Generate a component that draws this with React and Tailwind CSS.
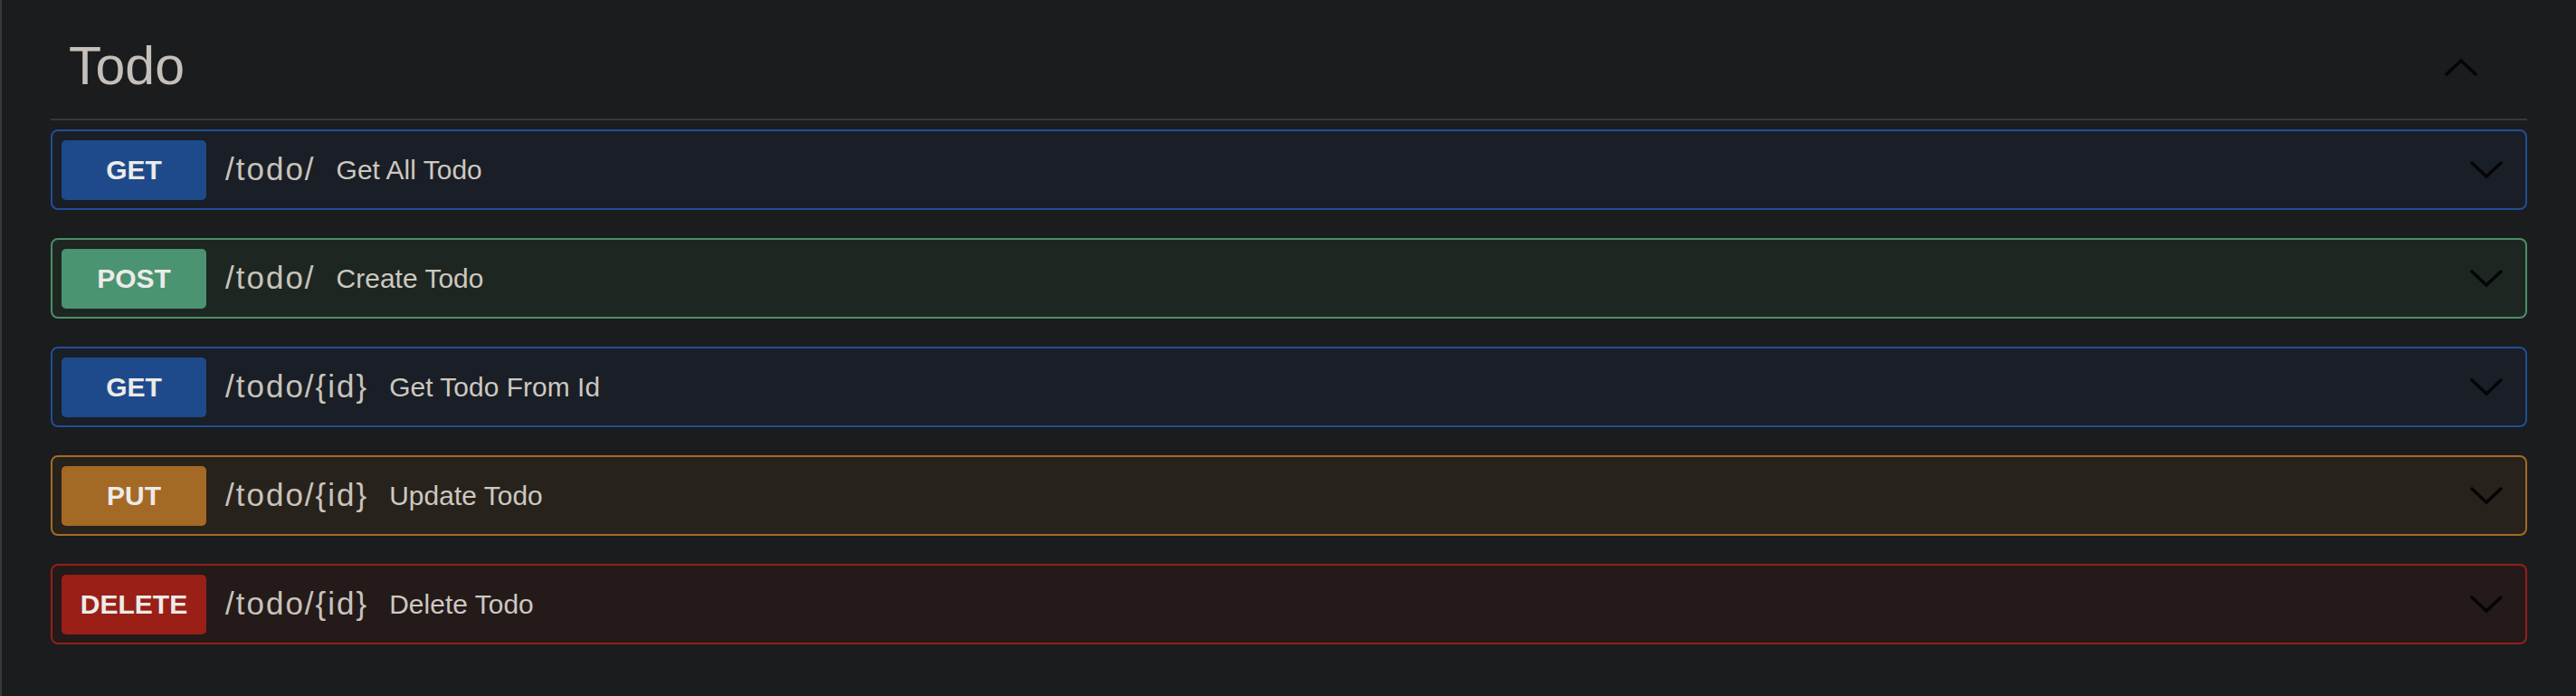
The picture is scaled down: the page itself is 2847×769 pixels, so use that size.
import React from 'react';

const styles = {
  GET: {
    row: 'bg-[#1a1e26] border-[#1f4f96]',
    badge: 'bg-[#1e4a8c]',
  },
  POST: {
    row: 'bg-[#1e2622] border-[#4a8f66]',
    badge: 'bg-[#4a9471]',
  },
  PUT: {
    row: 'bg-[#28221c] border-[#a66a24]',
    badge: 'bg-[#a56926]',
  },
  DELETE: {
    row: 'bg-[#241a1a] border-[#951f19]',
    badge: 'bg-[#991f17]',
  },
};

const operations = [
  { method: 'GET', path: '/todo/', summary: 'Get All Todo' },
  { method: 'POST', path: '/todo/', summary: 'Create Todo' },
  { method: 'GET', path: '/todo/{id}', summary: 'Get Todo From Id' },
  { method: 'PUT', path: '/todo/{id}', summary: 'Update Todo' },
  { method: 'DELETE', path: '/todo/{id}', summary: 'Delete Todo' },
];

const Chevron = ({ up = false }) => (
  <svg width="36" height="20" viewBox="0 0 36 20" fill="none" className="shrink-0">
    <polyline
      points={up ? '2,18 18,3 34,18' : '2,2 18,17 34,2'}
      stroke="#050505"
      strokeWidth="3.5"
      strokeLinecap="round"
      strokeLinejoin="miter"
    />
  </svg>
);

const OperationRow = ({ op }) => {
  const s = styles[op.method];
  return (
    <div className={`flex h-[89px] items-center rounded-[8px] border-2 pl-[10px] pr-[25px] ${s.row}`}>
      <span
        className={`flex h-[66px] w-[160px] shrink-0 items-center justify-center rounded-[5px] text-[30px] font-bold text-[#ecebe8] ${s.badge}`}
      >
        {op.method}
      </span>
      <span className="ml-[21px] text-[35px] tracking-[2px] text-[#c8c3bc]">{op.path}</span>
      <span className="ml-[23px] text-[30px] text-[#cdc8c0]">{op.summary}</span>
      <span className="ml-auto flex">
        <Chevron />
      </span>
    </div>
  );
};

const App = () => (
  <div
    className="min-h-[769px] border-l-2 border-[#3a3a3a] bg-[#1b1c1e] px-[54px]"
    style={{ fontFamily: '"Liberation Sans", Arial, sans-serif' }}
  >
    <div className="flex h-[133px] items-center border-b-2 border-[#3a3836] pl-[20px] pr-[55px] pt-[16px]">
      <h3 className="text-[59px] font-normal text-[#c5c0b9]">Todo</h3>
      <span className="ml-auto flex">
        <Chevron up />
      </span>
    </div>
    <div className="mt-[10px] flex flex-col gap-[31px]">
      {operations.map((op, i) => (
        <OperationRow key={i} op={op} />
      ))}
    </div>
  </div>
);

export default App;
